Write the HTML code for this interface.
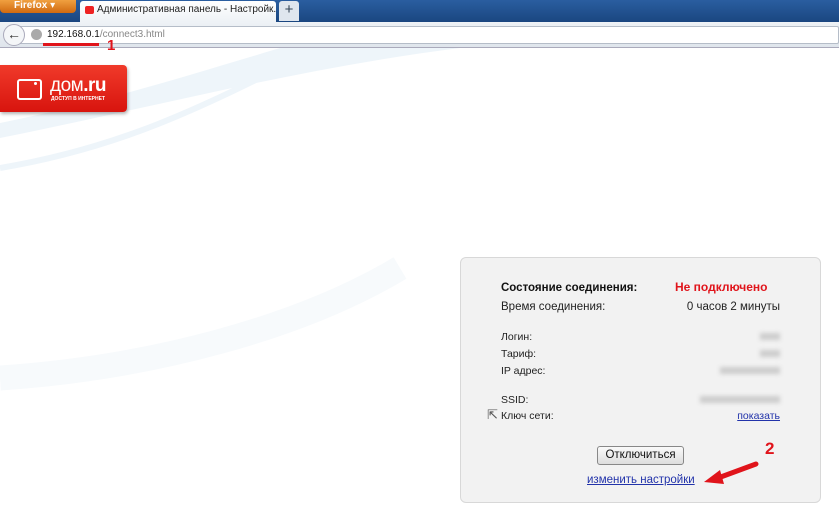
<!DOCTYPE html>
<html><head><meta charset="utf-8"><style>
*{margin:0;padding:0;box-sizing:border-box}
body{width:839px;height:530px;overflow:hidden;background:#fff;font-family:"Liberation Sans","DejaVu Sans",sans-serif;position:relative}
.abs{position:absolute}
.t{font-size:11px;color:#222}
.r{position:absolute;right:59px;text-align:right}
</style></head><body>
<div class="abs" style="left:0;top:0;width:839px;height:22px;background:linear-gradient(#2a5ea0,#1a4680)"></div>
<div class="abs" style="left:0;top:0;width:76px;height:13px;background:linear-gradient(#f0a040,#d06a10);border-radius:0 0 4px 4px;color:#fff;font-size:10px;font-weight:bold;padding-left:14px;line-height:12px">Firefox ▾</div>
<div class="abs" style="left:80px;top:1px;width:196px;height:21px;background:linear-gradient(#fff,#eef2f6);border-radius:3px 3px 0 0;font-size:10px;color:#222;line-height:18px;padding-left:17px;white-space:nowrap;overflow:hidden">Административная панель - Настройк...</div>
<div class="abs" style="left:85px;top:6px;width:9px;height:8px;background:#e22;border-radius:2px"></div>
<div class="abs" style="left:279px;top:1px;width:20px;height:20px;background:#dfe6ee;border-radius:3px 3px 0 0;text-align:center;font-size:15px;line-height:18px;color:#345">+</div>
<div class="abs" style="left:0;top:22px;width:839px;height:26px;background:linear-gradient(#eef2f6,#dfe5ec);border-bottom:1px solid #aab"></div>
<div class="abs" style="left:18px;top:26px;width:821px;height:18px;background:#fff;border:1px solid #b5bdc8;border-radius:2px"></div>
<div class="abs" style="left:3px;top:24px;width:22px;height:22px;border-radius:50%;background:#f4f6f8;border:1px solid #aab;font-size:14px;line-height:19px;text-align:center;color:#333;font-weight:bold">←</div>
<div class="abs" style="left:31px;top:29px;width:11px;height:11px;border-radius:50%;background:#aaa"></div>
<div class="abs" style="left:47px;top:29px;font-size:10px;color:#111;line-height:12px">192.168.0.1<span style="color:#888">/connect3.html</span></div>
<div class="abs" style="left:43px;top:43px;width:56px;height:3px;background:#e0141b"></div>
<div class="abs" style="left:107px;top:37px;font-size:15px;font-weight:bold;color:#e0141b">1</div>
<svg class="abs" style="left:0;top:48px" width="839" height="420"><path d="M0 90 C150 60 300 20 460 0 L280 0 C180 30 100 55 0 75Z" fill="#eaf3f9" opacity=".8"/><path d="M0 120 C120 100 200 60 300 10" stroke="#eef5fa" stroke-width="6" fill="none"/><path d="M0 330 C150 320 300 280 400 220" stroke="#f7fafc" stroke-width="25" fill="none"/></svg>
<div class="abs" style="left:0;top:65px;width:127px;height:47px;background:linear-gradient(#f03a2a,#d8140e);border-radius:0 4px 4px 0;box-shadow:1px 2px 3px rgba(0,0,0,.3)"></div>
<div class="abs" style="left:17px;top:79px;width:25px;height:21px;border:2px solid #fff;border-radius:3px"></div>
<div class="abs" style="left:34px;top:82px;width:3px;height:3px;background:#fff;border-radius:50%"></div>
<div class="abs" style="left:50px;top:76px;color:#fff;font-size:19px;line-height:20px;letter-spacing:-.5px">дом<b>.ru</b></div>
<div class="abs" style="left:51px;top:96px;color:#fff;font-size:5px;font-weight:bold">ДОСТУП В ИНТЕРНЕТ</div>
<div class="abs" style="left:460px;top:257px;width:361px;height:246px;background:#f2f2f2;border:1px solid #d8d8d8;border-radius:6px"></div>
<div class="abs" style="left:501px;top:282px;font-size:11.5px;font-weight:bold;color:#111">Состояние соединения:</div>
<div class="abs" style="left:675px;top:280px;font-size:12px;font-weight:bold;color:#e0141b">Не подключено</div>
<div class="abs" style="left:501px;top:301px;font-size:11.5px;color:#222">Время соединения:</div>
<div class="r" style="top:301px;font-size:11.5px;color:#222">0 часов 2 минуты</div>
<div class="abs t" style="left:501px;top:331px;font-size:10.5px">Логин:</div>
<div class="abs t" style="left:501px;top:348px;font-size:10.5px">Тариф:</div>
<div class="abs t" style="left:501px;top:365px;font-size:10.5px">IP адрес:</div>
<div class="abs t" style="left:501px;top:394px;font-size:10.5px">SSID:</div>
<div class="abs t" style="left:501px;top:410px;font-size:10.5px">Ключ сети:</div>
<div class="abs" style="left:760px;top:333px;width:20px;height:7px;background:#ccc;filter:blur(2px)"></div>
<div class="abs" style="left:760px;top:350px;width:20px;height:7px;background:#ccc;filter:blur(2px)"></div>
<div class="abs" style="left:720px;top:367px;width:60px;height:7px;background:#ccc;filter:blur(2px)"></div>
<div class="abs" style="left:700px;top:396px;width:80px;height:7px;background:#ccc;filter:blur(2px)"></div>
<div class="r" style="top:410px;font-size:10.5px;color:#2233aa;text-decoration:underline">показать</div>
<div class="abs" style="left:487px;top:407px;font-size:13px;color:#555">⇱</div>
<div class="abs" style="left:597px;top:446px;width:87px;height:19px;background:linear-gradient(#fafafa,#ddd);border:1px solid #888;border-radius:3px;font-size:11.5px;text-align:center;line-height:17px;color:#111">Отключиться</div>
<div class="abs" style="left:587px;top:474px;font-size:11.5px;color:#2233aa;text-decoration:underline">изменить настройки</div>
<div class="abs" style="left:765px;top:439px;font-size:17px;font-weight:bold;color:#e0141b">2</div>
<svg class="abs" style="left:700px;top:460px" width="60" height="30"><path d="M56 4 L18 18" stroke="#e0141b" stroke-width="5" stroke-linecap="round"/><path d="M4 22 L20 10 L24 24Z" fill="#e0141b"/></svg>
</body></html>
